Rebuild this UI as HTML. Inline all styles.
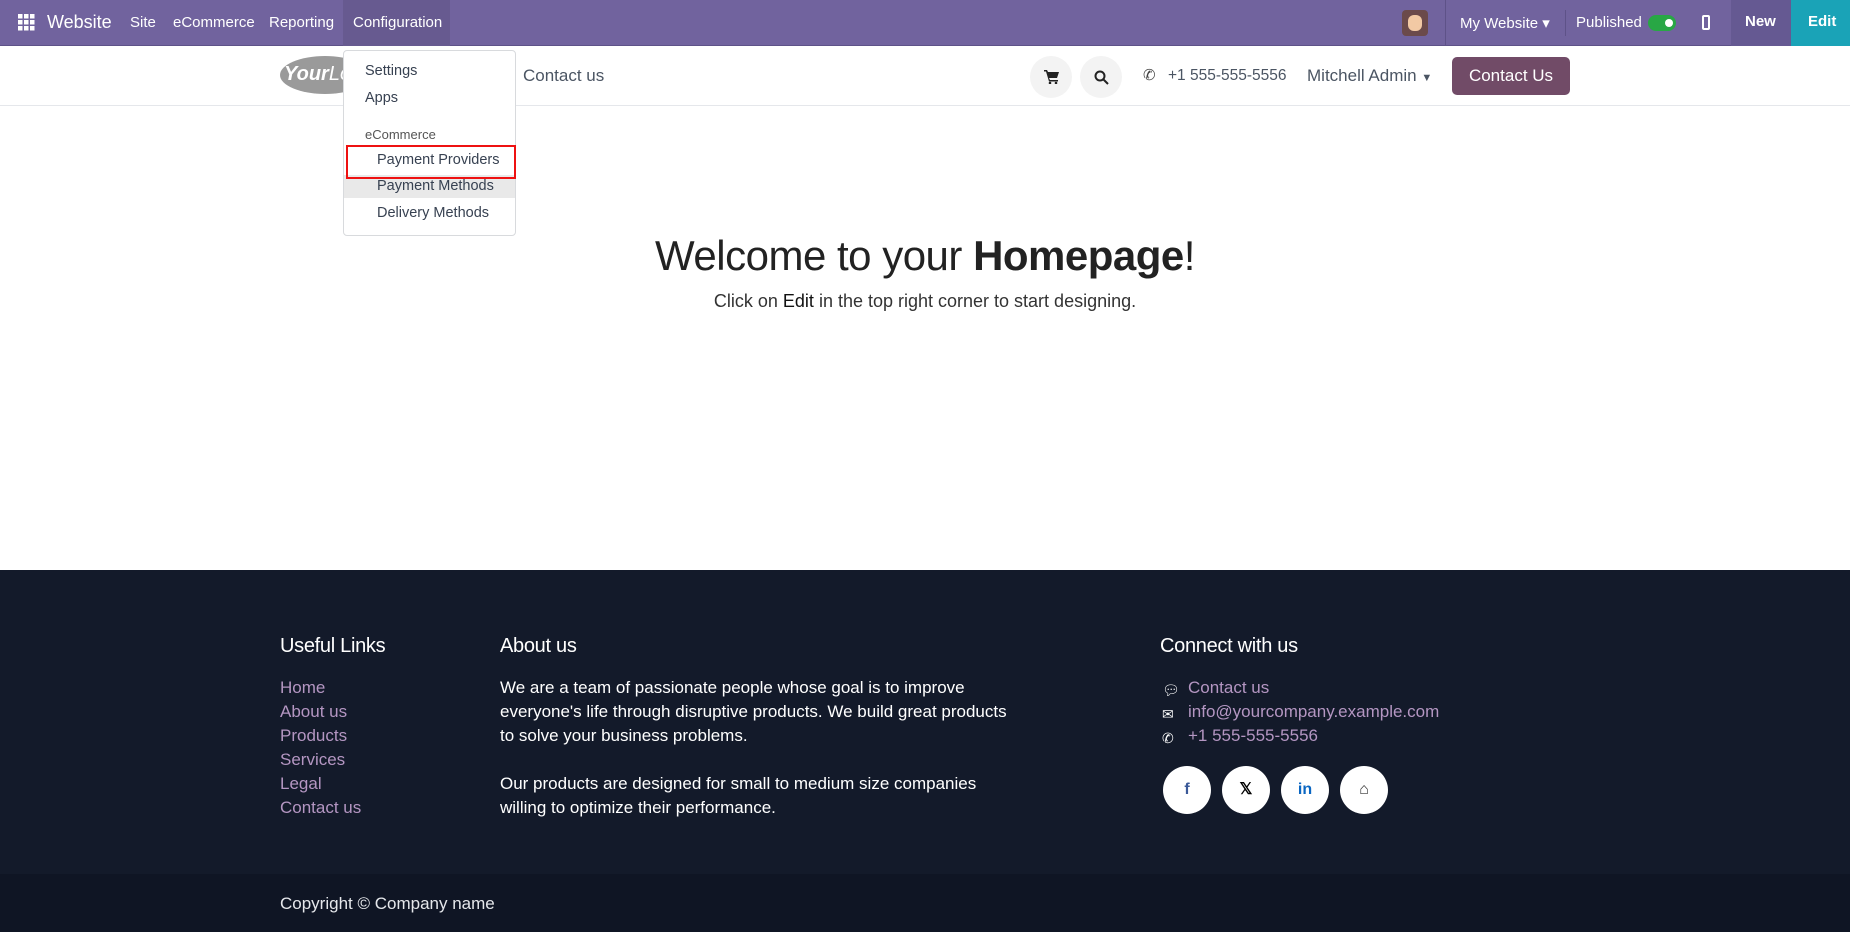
<!DOCTYPE html>
<html><head><meta charset="utf-8"><style>
*{box-sizing:border-box;margin:0;padding:0}
body{width:1850px;height:932px;overflow:hidden;font-family:"Liberation Sans",sans-serif;background:#fff;position:relative;color:#374151}
.a{position:absolute;white-space:nowrap}
.nav{position:absolute;left:0;top:0;width:1850px;height:46px;background:#71639e;border-bottom:1px solid #5e5288;color:#fff;font-size:15px}
.nav .a{top:14px}
.hdr{position:absolute;left:0;top:46px;width:1850px;height:60px;border-bottom:1px solid #e5e7eb;background:#fff}
.circ{position:absolute;border-radius:50%;background:#f3f3f3}
.dd{position:absolute;left:343px;top:50px;width:173px;height:186px;background:#fff;border:1px solid #d8dadd;border-radius:4px;font-size:14.5px;color:#374151}
.foot{position:absolute;left:0;top:570px;width:1850px;height:304px;background:#131a2a;color:#fff}
.bot{position:absolute;left:0;top:874px;width:1850px;height:58px;background:#0f1524;color:#e5e7eb;font-size:17px}
.fh{font-size:20px;top:65px;letter-spacing:-0.3px}
.lk{color:#b496c2;font-size:17px}
.ft{font-size:17px;line-height:24px}
.soc{position:absolute;top:196px;width:48px;height:48px;border-radius:50%;background:#fff;text-align:center;line-height:48px;font-weight:bold;font-size:16px}
</style></head><body>
<div class="nav">
 <svg class="a" style="left:18px;top:14px" width="17" height="17" viewBox="0 0 17 17" fill="#fff"><rect x="0" y="0" width="4.5" height="4.5"/><rect x="6" y="0" width="4.5" height="4.5"/><rect x="12" y="0" width="4.5" height="4.5"/><rect x="0" y="6" width="4.5" height="4.5"/><rect x="6" y="6" width="4.5" height="4.5"/><rect x="12" y="6" width="4.5" height="4.5"/><rect x="0" y="12" width="4.5" height="4.5"/><rect x="6" y="12" width="4.5" height="4.5"/><rect x="12" y="12" width="4.5" height="4.5"/></svg>
 <div class="a" style="left:47px;top:12px;font-size:18px">Website</div>
 <div class="a" style="left:130px">Site</div>
 <div class="a" style="left:173px">eCommerce</div>
 <div class="a" style="left:269px">Reporting</div>
 <div style="position:absolute;left:343px;top:0;width:107px;height:46px;background:#675a90"></div>
 <div class="a" style="left:353px">Configuration</div>
 <div style="position:absolute;left:1402px;top:10px;width:26px;height:26px;border-radius:4px;background:#6b4a4a"><div style="margin:5px 6px;width:14px;height:16px;border-radius:6px;background:#f2c9a4"></div></div>
 <div style="position:absolute;left:1445px;top:0;width:1px;height:46px;background:#5e5288"></div>
 <div class="a" style="left:1460px">My Website ▾</div>
 <div style="position:absolute;left:1565px;top:10px;width:1px;height:26px;background:#5e5288"></div>
 <div class="a" style="left:1576px">Published</div>
 <div style="position:absolute;left:1648px;top:15px;width:28px;height:16px;border-radius:8px;background:#28a745"><div style="position:absolute;right:3px;top:4px;width:8px;height:8px;border-radius:50%;background:#fff"></div></div>
 <div style="position:absolute;left:1702px;top:15px;width:8px;height:15px;border:2px solid #fff;border-radius:2px"></div>
 <div style="position:absolute;left:1731px;top:0;width:60px;height:46px;background:#655992"></div>
 <div class="a" style="left:1745px;top:13px;font-weight:bold">New</div>
 <div style="position:absolute;left:1791px;top:0;width:59px;height:46px;background:#1aa3b7"></div>
 <div class="a" style="left:1808px;top:13px;font-weight:bold">Edit</div>
</div>
<div class="hdr">
 <div style="position:absolute;left:280px;top:10px;width:90px;height:38px;border-radius:50%;background:#9a9a9a"></div>
 <div class="a" style="left:284px;top:17px;font-size:20px;color:#fff;font-weight:bold;font-style:italic">Your<span style="font-weight:normal">Lo</span></div>
 <div class="a" style="left:523px;top:20px;font-size:17px;color:#4b5563">Contact us</div>
 <div class="circ" style="left:1030px;top:10px;width:42px;height:42px"></div>
 <svg class="a" style="left:1044px;top:24px" width="15" height="14" viewBox="0 0 15 14" fill="#222"><path d="M0 0h3l1 2h11l-2 6H5l1 2h8v1.5H5L2 1.5H0z"/><circle cx="6" cy="13" r="1.3"/><circle cx="12" cy="13" r="1.3"/></svg>
 <div class="circ" style="left:1080px;top:10px;width:42px;height:42px"></div>
 <svg class="a" style="left:1094px;top:24px" width="15" height="15" viewBox="0 0 15 15" fill="none" stroke="#222" stroke-width="2"><circle cx="6" cy="6" r="4.5"/><path d="M9.5 9.5l4.5 4.5"/></svg>
 <div class="a" style="left:1143px;top:20px;font-size:15px;color:#444">✆</div>
 <div class="a" style="left:1168px;top:21px;font-size:15.5px;color:#4b5563">+1 555-555-5556</div>
 <div class="a" style="left:1307px;top:20px;font-size:17px;color:#4b5563">Mitchell Admin <span style="font-size:11px">▼</span></div>
 <div style="position:absolute;left:1452px;top:11px;width:118px;height:38px;border-radius:5px;background:#714b67;color:#fff;font-size:17px;text-align:center;line-height:38px">Contact Us</div>
</div>
<div class="dd">
 <div class="a" style="left:21px;top:12px">Settings</div>
 <div class="a" style="left:21px;top:39px">Apps</div>
 <div class="a" style="left:21px;top:76px;font-size:13px;color:#555">eCommerce</div>
 <div style="position:absolute;left:0;top:124px;width:171px;height:23px;background:#e9e9e9"></div>
 <div style="position:absolute;left:2px;top:94px;width:170px;height:34px;border:2px solid #e11;"></div>
 <div class="a" style="left:33px;top:101px">Payment Providers</div>
 <div class="a" style="left:33px;top:127px">Payment Methods</div>
 <div class="a" style="left:33px;top:154px">Delivery Methods</div>
</div>
<div class="a" style="left:0;width:1850px;text-align:center;top:232px;font-size:42px;color:#222;letter-spacing:-0.5px">Welcome to your <b>Homepage</b>!</div>
<div class="a" style="left:0;width:1850px;text-align:center;top:291px;font-size:18px;color:#333">Click on <span style="color:#111;font-weight:500">Edit</span> in the top right corner to start designing.</div>
<div class="foot">
 <div class="a fh" style="left:280px;top:65px">Useful Links</div>
 <div class="a lk" style="left:280px;top:106px;line-height:24px">Home<br>About us<br>Products<br>Services<br>Legal<br>Contact us</div>
 <div class="a fh" style="left:500px">About us</div>
 <div class="a ft" style="left:500px;top:106px">We are a team of passionate people whose goal is to improve<br>everyone's life through disruptive products. We build great products<br>to solve your business problems.<br><br>Our products are designed for small to medium size companies<br>willing to optimize their performance.</div>
 <div class="a fh" style="left:1160px">Connect with us</div>
 <div class="a" style="left:1162px;top:108px;font-size:14px;line-height:24px">💬︎<br>✉︎<br>✆</div>
 <div class="a lk" style="left:1188px;top:106px;line-height:24px">Contact us<br>info@yourcompany.example.com<br>+1 555-555-5556</div>
 <div class="soc" style="left:1163px;color:#3b5998">f</div>
 <div class="soc" style="left:1222px;color:#000">𝕏</div>
 <div class="soc" style="left:1281px;color:#0a66c2">in</div>
 <div class="soc" style="left:1340px;color:#333">⌂</div>
</div>
<div class="bot"><div class="a" style="left:280px;top:20px">Copyright © Company name</div></div>
</body></html>
